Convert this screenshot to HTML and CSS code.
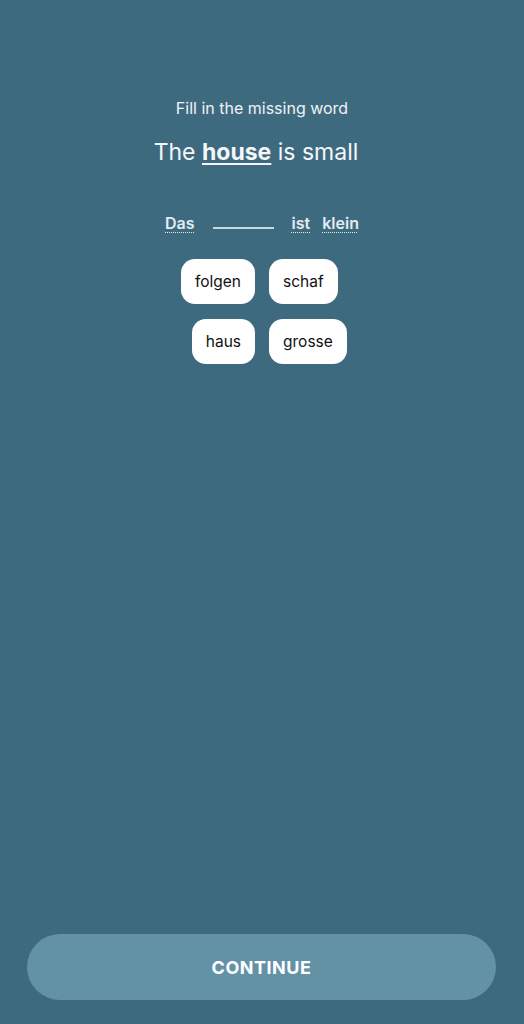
FILE: index.html
```html
<!DOCTYPE html>
<html lang="en">
<head>
<meta charset="utf-8">
<title>Fill in the missing word</title>
<link rel="stylesheet" href="styles.css">
</head>
<body>
<main class="screen">
  <section class="exercise">
    <p class="prompt">Fill in the missing word</p>
    <h1 class="sentence">The <span class="hl">house</span> is small</h1>
    <div class="target">
      <span class="word">Das</span>
      <span class="blank"></span>
      <span class="word">ist</span>
      <span class="word">klein</span>
    </div>
    <div class="choices">
      <button class="chip">folgen</button>
      <button class="chip">schaf</button>
      <button class="chip">haus</button>
      <button class="chip">grosse</button>
    </div>
  </section>
  <footer class="footer">
    <button class="continue">CONTINUE</button>
  </footer>
</main>
</body>
</html>
```
FILE: styles.css
```css
* { box-sizing: border-box; }
html, body { margin: 0; padding: 0; }
body {
  background: #3e6a80;
  font-family: Inter, "Noto Sans", "Liberation Sans", sans-serif;
  color: #ffffff;
}
.screen {
  height: 1024px;
  display: flex;
  flex-direction: column;
  justify-content: space-between;
}
.exercise {
  display: flex;
  flex-direction: column;
  align-items: center;
  padding-top: 98px;
}
.prompt {
  margin: 0;
  font-size: 16px;
  line-height: 20px;
  color: #eef3f5;
}
.sentence {
  margin: 20px 0 0;
  padding-right: 12px;
  font-size: 23px;
  line-height: 28px;
  font-weight: 400;
  color: #f4f7f8;
}
.hl {
  font-weight: 700;
  text-decoration: underline;
  text-decoration-thickness: 2px;
  text-underline-offset: 3px;
}
.target {
  margin-top: 47px;
  display: flex;
  align-items: center;
  gap: 12px;
  font-size: 16px;
  line-height: 20px;
  font-weight: 600;
  color: #e4ecf0;
}
.word {
  text-decoration: underline dotted;
  text-decoration-thickness: 1px;
  text-underline-offset: 3px;
}
.blank {
  width: 61px;
  height: 2px;
  margin: 10px 6px 0;
  background: #c9d8df;
}
.choices {
  margin-top: 26px;
  display: grid;
  grid-template-columns: 1fr 1fr;
  column-gap: 14px;
  row-gap: 15px;
  width: 100%;
  justify-items: start;
}
.choices .chip:nth-child(odd) { justify-self: end; }
.chip {
  height: 45px;
  padding: 0 14px;
  border: none;
  border-radius: 14px;
  background: #ffffff;
  color: #111;
  font-family: inherit;
  font-size: 15.5px;
}
.footer {
  padding: 0 28px 24px 27px;
}
.continue {
  width: 100%;
  height: 66px;
  border: none;
  border-radius: 33px;
  background: #6391a6;
  color: #ffffff;
  font-family: inherit;
  font-size: 18px;
  font-weight: 700;
  letter-spacing: 0.5px;
}
```
